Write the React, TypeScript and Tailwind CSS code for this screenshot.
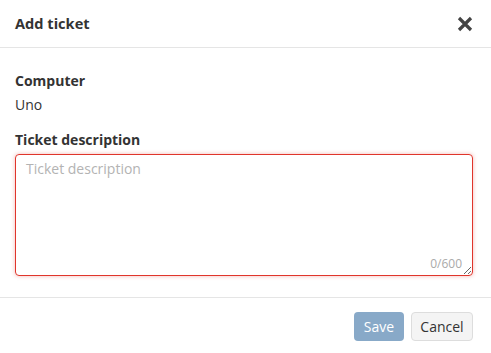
import React from "react";

export default function App() {
  return (
    <div className="w-[491px] h-[353px] bg-white text-[#333] font-['Open_Sans',sans-serif] flex flex-col">
      <div className="h-[48px] flex items-center justify-between pl-[15px] pr-[18px] border-b border-[#e5e5e5]">
        <h2 className="text-[14.6px] font-bold text-[#333]">Add ticket</h2>
        <svg width="16" height="16" viewBox="0 0 16 16" className="text-[#444]">
          <path d="M2 2 L14 14 M14 2 L2 14" stroke="currentColor" strokeWidth="3.2" strokeLinecap="butt" />
        </svg>
      </div>
      <div className="pl-[15px] pr-[18px] pt-[23px] h-[250px] border-b border-[#e5e5e5]">
        <div className="text-[14px] font-bold leading-[20px]">Computer</div>
        <div className="text-[14px] leading-[20px] mt-[4px]">Uno</div>
        <div className="text-[14px] font-bold leading-[20px] mt-[15px]">Ticket description</div>
        <div className="relative mt-[4px] h-[122px] rounded-[4px] border border-[#e0352b] shadow-[0_0_4px_rgba(224,53,43,0.35)]">
          <textarea
            autoFocus
            placeholder="Ticket description"
            className="w-full h-full resize-y outline-none bg-transparent rounded-[4px] px-[10px] pt-[4px] text-[14px] leading-[20px] placeholder:text-[#b3b3b3] caret-black"
          />
          <span className="absolute right-[10px] bottom-[2px] text-[12px] text-[#aaa]">0/600</span>
        </div>
      </div>
      <div className="flex justify-end gap-[7px] pr-[18px] pt-[14px]">
        <button className="h-[29px] w-[50px] rounded-[4px] bg-[#88a9c8] text-white text-[14px]">Save</button>
        <button className="h-[29px] w-[62px] rounded-[4px] bg-[#f4f4f4] border border-[#ddd] text-[#333] text-[14px]">Cancel</button>
      </div>
    </div>
  );
}
